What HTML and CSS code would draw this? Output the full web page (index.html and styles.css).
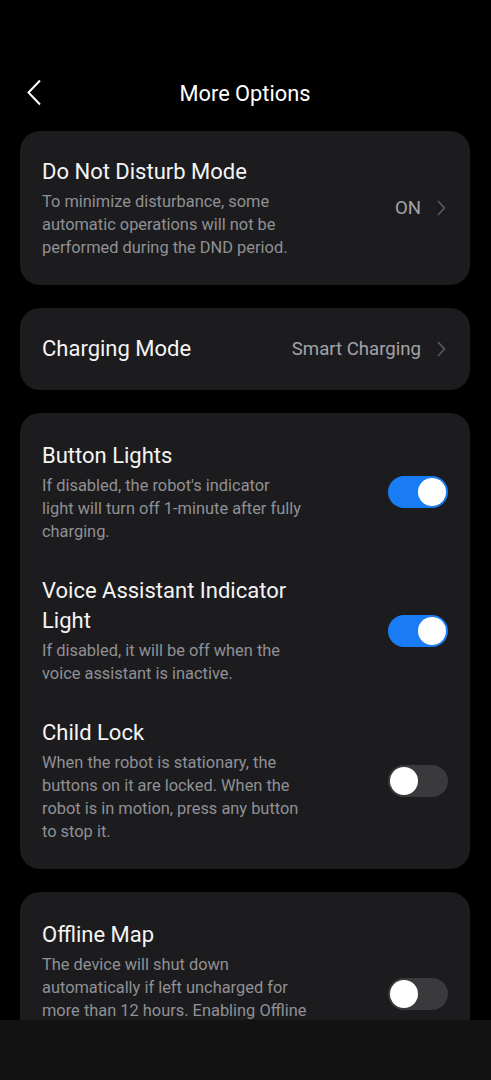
FILE: index.html
```html
<!DOCTYPE html>
<html lang="en">
<head>
    <meta charset="UTF-8">
    <meta name="viewport" content="width=device-width, initial-scale=1.0">
    <title>More Options</title>
    <link rel="stylesheet" href="styles.css">
</head>
<body>
    <header class="topbar">
        <a class="back" href="#">
            <svg width="16" height="27" viewBox="0 0 16 27"><path d="M14 1.5 L2.5 13.5 L14 25.5" fill="none" stroke="#fff" stroke-width="2"/></svg>
        </a>
        <h1>More Options</h1>
    </header>

    <main class="list">
        <section class="card">
            <div class="row">
                <div class="text">
                    <h2>Do Not Disturb Mode</h2>
                    <p>To minimize disturbance, some<br>automatic operations will not be<br>performed during the DND period.</p>
                </div>
                <div class="value">ON<span class="chev"><svg width="9" height="16" viewBox="0 0 9 16"><path d="M1 1 L7.5 8 L1 15" fill="none" stroke="#5b5b60" stroke-width="1.6"/></svg></span></div>
            </div>
        </section>

        <section class="card">
            <div class="row">
                <div class="text">
                    <h2>Charging Mode</h2>
                </div>
                <div class="value">Smart Charging<span class="chev"><svg width="9" height="16" viewBox="0 0 9 16"><path d="M1 1 L7.5 8 L1 15" fill="none" stroke="#5b5b60" stroke-width="1.6"/></svg></span></div>
            </div>
        </section>

        <section class="card group">
            <div class="row">
                <div class="text">
                    <h2>Button Lights</h2>
                    <p>If disabled, the robot's indicator<br>light will turn off 1-minute after fully<br>charging.</p>
                </div>
                <span class="switch on"><span class="knob"></span></span>
            </div>
            <div class="row">
                <div class="text">
                    <h2>Voice Assistant Indicator<br>Light</h2>
                    <p>If disabled, it will be off when the<br>voice assistant is inactive.</p>
                </div>
                <span class="switch on"><span class="knob"></span></span>
            </div>
            <div class="row">
                <div class="text">
                    <h2>Child Lock</h2>
                    <p>When the robot is stationary, the<br>buttons on it are locked. When the<br>robot is in motion, press any button<br>to stop it.</p>
                </div>
                <span class="switch"><span class="knob"></span></span>
            </div>
        </section>

        <section class="card group">
            <div class="row">
                <div class="text">
                    <h2>Offline Map</h2>
                    <p>The device will shut down<br>automatically if left uncharged for<br>more than 12 hours. Enabling Offline<br>Map keeps the device on, but it will<br>use more power.</p>
                </div>
                <span class="switch"><span class="knob"></span></span>
            </div>
        </section>
    </main>

    <div class="navbar"></div>
</body>
</html>
```

FILE: styles.css
```css
* {
    margin: 0;
    padding: 0;
    box-sizing: border-box;
}

body {
    font-family: Roboto, 'Noto Sans', sans-serif;
    background-color: #000;
    color: #fff;
    padding: 0 21px 80px 20px;
}

.topbar {
    position: relative;
    height: 54px;
    margin-top: 66px;
    margin-bottom: 11px;
    display: flex;
    align-items: center;
    justify-content: center;
}

    .topbar h1 {
        font-size: 21.8px;
        font-weight: 400;
    }

.back {
    position: absolute;
    left: 6px;
    top: 13px;
    display: flex;
}

.list {
    display: flex;
    flex-direction: column;
    gap: 23px;
}

.card {
    background-color: #1c1c1e;
    border-radius: 20px;
    padding: 26px 22px 26px 22px;
}

    .card.group {
        padding-top: 28px;
        display: flex;
        flex-direction: column;
        gap: 33px;
    }

.row {
    display: flex;
    align-items: center;
    justify-content: space-between;
}

.text {
    max-width: 290px;
}

    .text h2 {
        font-size: 22px;
        font-weight: 400;
        line-height: 30px;
        color: #f4f4f4;
    }

    .text p {
        margin-top: 3px;
        font-size: 16.4px;
        line-height: 23px;
        color: #909095;
    }

.value {
    display: flex;
    align-items: center;
    font-size: 18.6px;
    color: #a3a3a8;
}

.chev {
    display: flex;
    margin-left: 16px;
    margin-right: 2px;
}

.switch {
    flex: none;
    position: relative;
    width: 60px;
    height: 32px;
    border-radius: 16px;
    background-color: #3a3a3d;
}

    .switch.on {
        background-color: #1a7cf5;
    }

.knob {
    position: absolute;
    top: 2px;
    left: 2px;
    width: 28px;
    height: 28px;
    border-radius: 50%;
    background-color: #fff;
}

.switch.on .knob {
    left: 30px;
}

.navbar {
    position: fixed;
    left: 0;
    right: 0;
    bottom: 0;
    height: 60px;
    background-color: #121212;
}
```
